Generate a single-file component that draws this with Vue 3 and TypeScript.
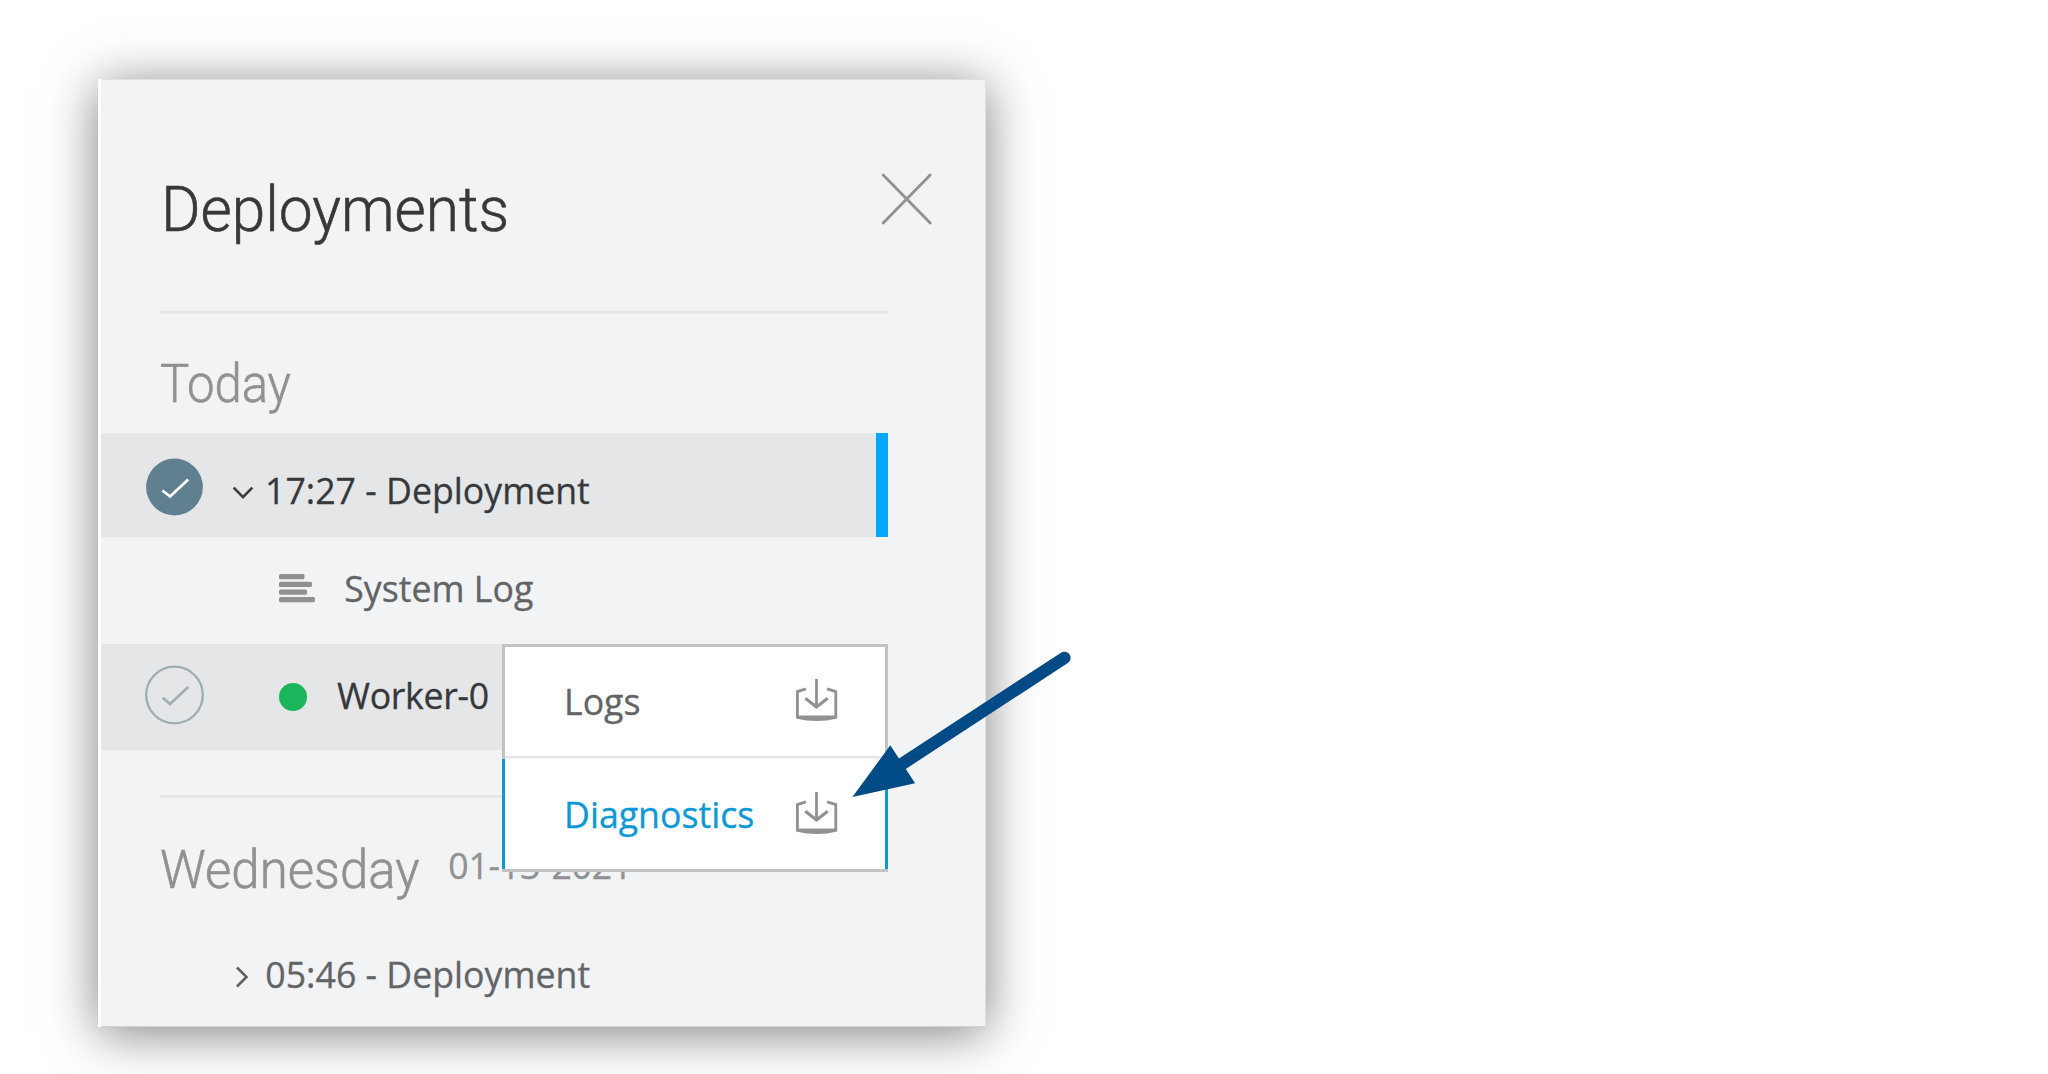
<script setup lang="ts">
const actions = [
  { label: 'Logs', active: false },
  { label: 'Diagnostics', active: true },
]
</script>

<template>
  <main class="stage">
    <aside class="panel">
      <header class="head">
        <h1 class="title">Deployments</h1>
        <svg class="close" width="52" height="52" viewBox="0 0 52 52">
          <path d="M2.2 2L49.2 50M49.2 2L2.2 50" fill="none" stroke="#8f9192" stroke-width="2.8" stroke-linecap="round" />
        </svg>
      </header>
      <h2 class="day today"><span class="t-today">Today</span></h2>
      <div class="row selected">
        <svg class="status" width="60" height="60" viewBox="0 0 60 60">
          <circle cx="30.5" cy="30" r="28.4" fill="#607f8f" />
          <path d="M18.4 33.5L26.1 39.5L44.2 22.5" fill="none" stroke="#fff" stroke-width="2.8" />
        </svg>
        <svg class="chev" width="22" height="14" viewBox="0 0 22 14">
          <path d="M1.7 1.6L11 11.1L20.3 1.6" fill="none" stroke="#3a3c3e" stroke-width="2.7" />
        </svg>
        <span class="text">17:27 - Deployment</span>
      </div>
      <div class="row log">
        <svg class="lines" width="36" height="29" viewBox="0 0 36 29" fill="#8f9192">
          <rect width="25.5" height="5.3" rx="1.6" />
          <rect y="7.7" width="33" height="5.3" rx="1.6" />
          <rect y="15.4" width="28" height="5.3" rx="1.6" />
          <rect y="23" width="36" height="5.3" rx="1.6" />
        </svg>
        <span class="text">System Log</span>
      </div>
      <div class="row worker">
        <svg class="status" width="60" height="60" viewBox="0 0 60 60">
          <circle cx="30.5" cy="30" r="28.3" fill="none" stroke="#9fadb4" stroke-width="2.3" />
          <path d="M18.7 32.7L26 39L44.3 22" fill="none" stroke="#9fadb4" stroke-width="2.5" />
        </svg>
        <i class="dot"></i>
        <span class="text">Worker-0</span>
      </div>
      <h2 class="day wednesday">
        <span class="t-wed">Wednesday</span>
        <small class="text t-date">01-13-2021</small>
      </h2>
      <div class="row older">
        <svg class="chev" width="14" height="22" viewBox="0 0 14 22">
          <path d="M2 1.5L11.5 11L2 20.5" fill="none" stroke="#5d5f60" stroke-width="2.5" />
        </svg>
        <span class="text">05:46 - Deployment</span>
      </div>

      <div class="menu">
        <div v-for="a in actions" :key="a.label" class="item" :class="{ active: a.active }">
          <span class="text">{{ a.label }}</span>
          <svg class="download" width="42" height="43" viewBox="0 0 42 43" fill="none" stroke="#8f9192">
            <path d="M20.5 0V28" stroke-width="2.8" />
            <path d="M9.3 19.2L20.5 28L31.7 19.2" stroke-width="3" />
            <path d="M9.9 9.8L1.4 12.6V37.5M31.1 9.8L39.8 12.6V37.5" stroke-width="2.8" />
            <path d="M0 36.5H41.2V39.5Q20.6 44.5 0 39.5Z" fill="#8f9192" stroke="none" />
          </svg>
        </div>
      </div>
    </aside>

    <svg class="pointer" width="230" height="156" viewBox="0 0 230 156">
      <path d="M214.4 12.9L52 119" stroke="#004a86" stroke-width="12.4" stroke-linecap="round" />
      <path d="M2.4 152L40.3 100.3L65.1 138.3Z" fill="#004a86" />
    </svg>
  </main>
</template>

<style>
body {
  margin: 0;
  background: #fff;
}
</style>

<style scoped>
.stage {
  position: relative;
  box-sizing: border-box;
  width: 2048px;
  height: 1074px;
  padding: 79px 0 0 98px;
  overflow: hidden;
  background: #fff;
}
.panel {
  position: relative;
  box-sizing: border-box;
  width: 888px;
  height: 948px;
  border-left: 3px solid #fff;
  background: #f1f3f5;
  box-shadow:
    inset 0 1px #dfe0e1,
    inset -1px 0 #dfe0e1,
    inset 0 -1px #d0d1d2,
    0 6px 48px rgba(0, 0, 0, 0.5);
}
h1,
h2 {
  margin: 0;
  font-family: Roboto, sans-serif;
  font-weight: 300;
  white-space: nowrap;
}
.head {
  display: flex;
  justify-content: space-between;
  box-sizing: border-box;
  height: 235px;
  margin-left: 59px;
  width: 728px;
  border-bottom: 3px solid #e4e6e8;
}
.title {
  margin: 94px 0 0 1px;
  font-size: 63.5px;
  line-height: 74px;
  color: #36383a;
  transform: scaleX(0.951);
  transform-origin: left;
  -webkit-text-stroke: 0.6px;
}
.close {
  flex: none;
  margin: 94px -45px 0 0;
}
.day {
  display: flex;
  box-sizing: border-box;
  margin-left: 59px;
  font-size: 54.5px;
  line-height: 64px;
  color: #8f9192;
}
.today {
  height: 119px;
  padding-top: 38px;
}
.t-today,
.t-wed {
  transform: scaleX(0.9);
  transform-origin: left;
  -webkit-text-stroke: 0.6px;
}
.today .t-today {
  margin-top: -1px;
}
.t-wed {
  transform: scaleX(0.936);
}
.row {
  display: flex;
  align-items: flex-start;
  box-sizing: border-box;
  width: 787px;
}
.text {
  font-family: 'Open Sans', 'Noto Sans', sans-serif;
  font-weight: 400;
  font-size: 35.7px;
  line-height: 50px;
  white-space: nowrap;
  -webkit-text-stroke: 0.3px;
}
.status {
  flex: none;
  margin-left: 43px;
}
.selected {
  height: 104px;
  padding-top: 24px;
  border-right: 12px solid #00a8ff;
  background: #e4e6e8;
  color: #36383a;
}
.selected .chev {
  margin: 28.5px 0 0 27.5px;
}
.selected .text {
  margin: 8px 0 0 11.5px;
}
.log {
  height: 106.5px;
  padding: 26px 0 0 178px;
  color: #626466;
}
.lines {
  margin-top: 10.5px;
}
.log .text {
  margin: 0 0 0 29.3px;
}
.worker {
  height: 106.5px;
  padding-top: 21.5px;
  background: #e4e6e8;
  color: #36383a;
}
.dot {
  flex: none;
  width: 28px;
  height: 28px;
  margin: 18px 0 0 75px;
  border-radius: 50%;
  background: #1bb65c;
}
.worker .text {
  margin: 4.5px 0 0 30px;
  letter-spacing: -0.3px;
}
.wednesday {
  width: 728px;
  height: 153px;
  margin-top: 45px;
  padding-top: 38.5px;
  border-top: 3px solid #e4e6e8;
}
.t-date {
  margin: 3px 0 0 11px;
  letter-spacing: -0.25px;
}
.older {
  padding-left: 134px;
  color: #626466;
}
.older .chev {
  margin-top: 17.5px;
}
.older .text {
  margin: 1px 0 0 16.3px;
}
.menu {
  position: absolute;
  left: 401px;
  top: 564.5px;
  width: 386px;
  height: 228px;
  box-sizing: border-box;
  border-top: 3px solid #c0c2c4;
  border-bottom: 3px solid #c0c2c4;
  background: #fff;
}
.item {
  display: flex;
  justify-content: space-between;
  box-sizing: border-box;
  height: 112px;
  padding: 32px 47.5px 0 59px;
  border: solid #c0c2c4;
  border-width: 0 3px;
  color: #626466;
  background: linear-gradient(#e4e6e8, #e4e6e8) bottom / 100% 2.5px no-repeat;
}
.item .text {
  margin-top: -3px;
}
.item.active {
  height: 110px;
  padding-top: 33px;
  border-color: #0e98d6;
  color: #0e98d6;
  background: none;
}
.pointer {
  position: absolute;
  left: 850px;
  top: 645px;
}
</style>
